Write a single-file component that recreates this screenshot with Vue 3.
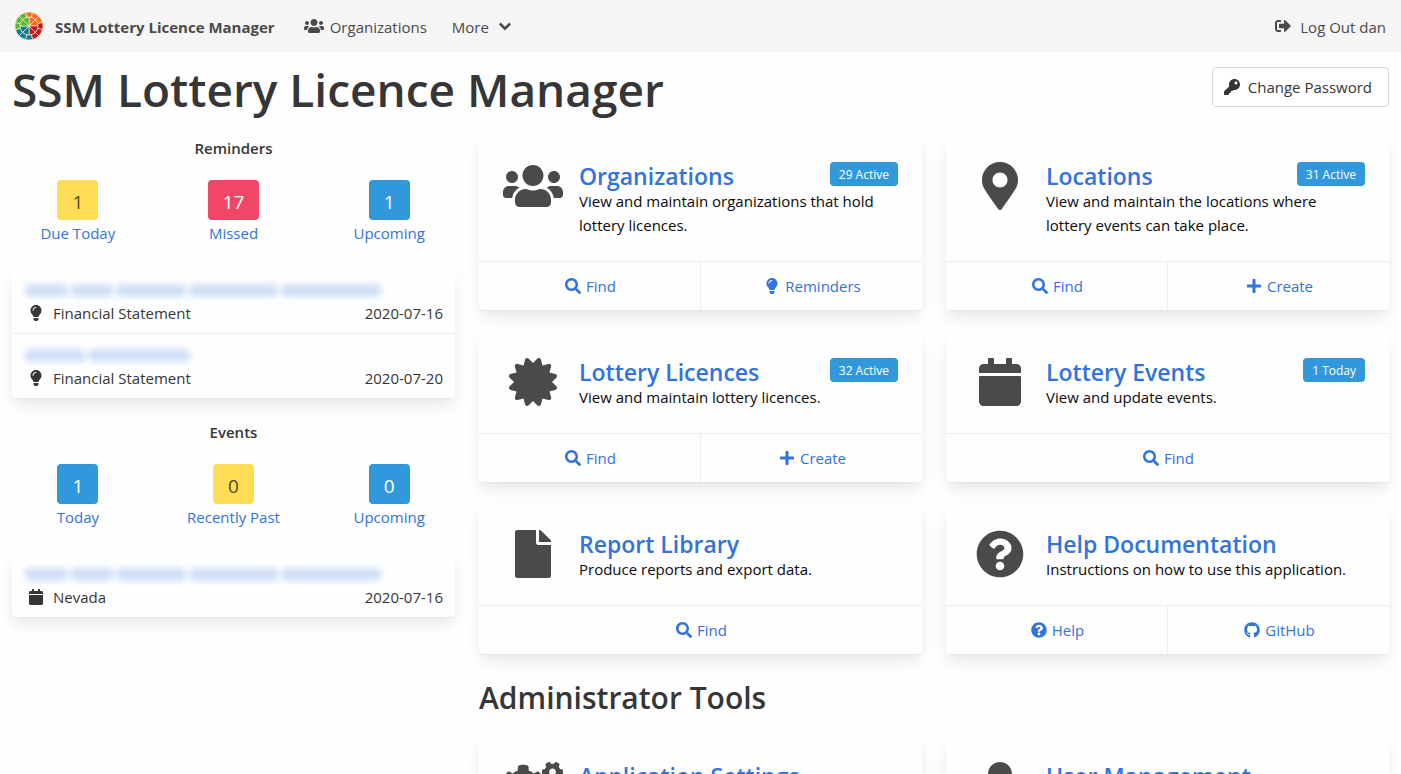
<script setup>
import { h } from 'vue'

const glyphs = {
  users: [640, 'M96 224c35.3 0 64-28.7 64-64s-28.7-64-64-64-64 28.7-64 64 28.7 64 64 64zm448 0c35.3 0 64-28.7 64-64s-28.7-64-64-64-64 28.7-64 64 28.7 64 64 64zm32 32h-64c-17.6 0-33.5 7.1-45.1 18.6 40.3 22.1 68.9 62 75.1 109.4h66c17.7 0 32-14.3 32-32v-32c0-35.3-28.7-64-64-64zm-256 0c61.9 0 112-50.1 112-112S381.9 32 320 32 208 82.1 208 144s50.1 112 112 112zm76.8 32h-8.3c-20.8 10-43.9 16-68.5 16s-47.6-6-68.5-16h-8.3C179.6 288 128 339.6 128 403.2V432c0 26.5 21.5 48 48 48h288c26.5 0 48-21.5 48-48v-28.8c0-63.6-51.6-115.2-115.2-115.2zm-223.7-13.4C161.5 263.1 145.6 256 128 256H64c-35.3 0-64 28.7-64 64v32c0 17.7 14.3 32 32 32h65.9c6.3-47.4 34.9-87.3 75.2-109.4z'],
  marker: [384, 'M172.268 501.67C26.97 291.031 0 269.413 0 192 0 85.961 85.961 0 192 0s192 85.961 192 192c0 77.413-26.97 99.031-172.268 309.67-9.535 13.774-29.93 13.773-39.464 0zM192 272c44.183 0 80-35.817 80-80s-35.817-80-80-80-80 35.817-80 80 35.817 80 80 80z'],
  certificate: [512, 'M458.622 255.92l45.985-45.005c13.708-12.977 7.316-36.039-10.664-40.339l-62.65-15.99 17.661-62.015c4.991-17.838-11.829-34.663-29.661-29.671l-61.994 17.667-15.984-62.671C337.085.197 313.765-6.276 300.99 7.228L256 53.57 211.011 7.229c-12.63-13.351-36.047-7.234-40.325 10.668l-15.984 62.671-61.995-17.667C74.87 57.907 58.056 74.738 63.046 92.572l17.661 62.015-62.65 15.99C.069 174.878-6.31 197.944 7.392 210.915l45.985 45.005-45.985 45.004c-13.708 12.977-7.316 36.039 10.664 40.339l62.65 15.99-17.661 62.015c-4.991 17.838 11.829 34.663 29.661 29.671l61.994-17.667 15.984 62.671c4.439 18.575 27.696 24.018 40.325 10.668L256 458.61l44.989 46.001c12.5 13.488 35.987 7.486 40.325-10.668l15.984-62.671 61.994 17.667c17.836 4.994 34.651-11.837 29.661-29.671l-17.661-62.015 62.65-15.99c17.987-4.302 24.366-27.367 10.664-40.339l-45.984-45.004z'],
  calendar: [448, 'M12 192h424c6.6 0 12 5.4 12 12v260c0 26.5-21.5 48-48 48H48c-26.5 0-48-21.5-48-48V204c0-6.6 5.4-12 12-12zm436-44v-36c0-26.5-21.5-48-48-48h-48V12c0-6.6-5.4-12-12-12h-40c-6.6 0-12 5.4-12 12v52H160V12c0-6.6-5.4-12-12-12h-40c-6.6 0-12 5.4-12 12v52H48C21.5 64 0 85.5 0 112v36c0 6.6 5.4 12 12 12h424c6.6 0 12-5.4 12-12z'],
  file: [384, 'M224 136V0H24C10.7 0 0 10.7 0 24v464c0 13.3 10.7 24 24 24h336c13.3 0 24-10.7 24-24V160H248c-13.2 0-24-10.8-24-24zm160-14.1v6.1H256V0h6.1c6.4 0 12.5 2.5 17 7l97.9 98c4.5 4.5 7 10.6 7 16.9z'],
  question: [512, 'M504 256c0 136.997-111.043 248-248 248S8 392.997 8 256C8 119.083 119.043 8 256 8s248 111.083 248 248zM262.655 90c-54.497 0-89.255 22.957-116.549 63.758-3.536 5.286-2.353 12.415 2.715 16.258l34.699 26.31c5.205 3.947 12.621 3.008 16.665-2.122 17.864-22.658 30.113-35.797 57.303-35.797 20.429 0 45.698 13.148 45.698 32.958 0 14.976-12.363 22.667-32.534 33.976C247.128 238.528 216 254.941 216 296v4c0 6.627 5.373 12 12 12h56c6.627 0 12-5.373 12-12v-1.333c0-28.462 83.186-29.647 83.186-106.667 0-58.002-60.165-102-116.531-102zM256 338c-25.365 0-46 20.635-46 46 0 25.364 20.635 46 46 46s46-20.636 46-46c0-25.365-20.635-46-46-46z'],
  search: [512, 'M505 442.7L405.3 343c-4.5-4.5-10.6-7-17-7H372c27.6-35.3 44-79.7 44-128C416 93.1 322.9 0 208 0S0 93.1 0 208s93.1 208 208 208c48.3 0 92.7-16.4 128-44v16.3c0 6.4 2.5 12.5 7 17l99.7 99.7c9.4 9.4 24.6 9.4 33.9 0l28.3-28.3c9.4-9.4 9.4-24.6.1-34zM208 336c-70.7 0-128-57.2-128-128 0-70.7 57.2-128 128-128 70.7 0 128 57.2 128 128 0 70.7-57.2 128-128 128z'],
  plus: [448, 'M416 208H272V64c0-17.67-14.33-32-32-32h-32c-17.67 0-32 14.33-32 32v144H32c-17.67 0-32 14.33-32 32v32c0 17.67 14.33 32 32 32h144v144c0 17.67 14.33 32 32 32h32c17.67 0 32-14.33 32-32V304h144c17.67 0 32-14.33 32-32v-32c0-17.67-14.33-32-32-32z'],
  bulb: [352, 'M96.06 454.35c.01 6.29 1.87 12.45 5.36 17.69l17.09 25.69a31.99 31.99 0 0 0 26.64 14.28h61.71a31.99 31.99 0 0 0 26.64-14.28l17.09-25.69a31.989 31.989 0 0 0 5.36-17.69l.04-38.35H96.01l.05 38.35zM0 176c0 44.37 16.45 84.85 43.56 115.78 16.52 18.85 42.36 58.23 52.21 91.45.04.26.07.52.11.78h160.24c.04-.26.07-.51.11-.78 9.85-33.22 35.69-72.6 52.21-91.45C335.55 260.85 352 220.37 352 176 352 78.61 272.91-.3 175.45 0 73.44.31 0 82.97 0 176zm176-80c-44.11 0-80 35.89-80 80 0 8.84-7.16 16-16 16s-16-7.16-16-16c0-61.76 50.24-112 112-112 8.84 0 16 7.16 16 16s-7.16 16-16 16z'],
  github: [496, 'M165.9 397.4c0 2-2.3 3.6-5.2 3.6-3.3.3-5.6-1.3-5.6-3.6 0-2 2.3-3.6 5.2-3.6 3-.3 5.6 1.3 5.6 3.6zm-31.1-4.5c-.7 2 1.3 4.3 4.3 4.9 2.6 1 5.6 0 6.2-2s-1.3-4.3-4.3-5.2c-2.6-.7-5.5.3-6.2 2.3zm44.2-1.7c-2.9.7-4.9 2.6-4.6 4.9.3 2 2.9 3.3 5.9 2.6 2.9-.7 4.9-2.6 4.6-4.6-.3-1.9-3-3.2-5.9-2.9zM244.8 8C106.1 8 0 113.3 0 252c0 110.9 69.8 205.8 169.5 239.2 12.8 2.3 17.3-5.6 17.3-12.1 0-6.2-.3-40.4-.3-61.4 0 0-70 15-84.7-29.8 0 0-11.4-29.1-27.8-36.6 0 0-22.9-15.7 1.6-15.4 0 0 24.9 2 38.6 25.8 21.9 38.6 58.6 27.5 72.9 20.9 2.3-16 8.8-27.1 16-33.7-55.9-6.2-112.3-14.3-112.3-110.5 0-27.5 7.6-41.3 23.6-58.9-2.6-6.5-11.1-33.3 2.6-67.9 20.9-6.5 69 27 69 27 20-5.6 41.5-8.5 62.8-8.5s42.8 2.9 62.8 8.5c0 0 48.1-33.6 69-27 13.7 34.7 5.2 61.4 2.6 67.9 16 17.7 25.8 31.5 25.8 58.9 0 96.5-58.9 104.2-114.8 110.5 9.2 7.9 17 22.9 17 46.4 0 33.7-.3 75.4-.3 83.6 0 6.5 4.6 14.4 17.3 12.1C428.2 457.8 496 362.9 496 252 496 113.3 383.5 8 244.8 8z'],
  key: [512, 'M512 176.001C512 273.203 433.202 352 336 352c-11.22 0-22.19-1.062-32.827-3.069l-24.012 27.014A23.999 23.999 0 0 1 261.223 384H224v40c0 13.255-10.745 24-24 24h-40v40c0 13.255-10.745 24-24 24H24c-13.255 0-24-10.745-24-24v-78.059c0-6.365 2.529-12.47 7.029-16.971l161.802-161.802C163.108 213.814 160 195.271 160 176 160 78.798 238.797.001 335.999 0 433.488-.001 512 78.511 512 176.001zM336 128c0 26.51 21.49 48 48 48s48-21.49 48-48-21.49-48-48-48-48 21.49-48 48z'],
  signOut: [512, 'M497 273L329 441c-15 15-41 4.5-41-17v-96H152c-13.3 0-24-10.7-24-24v-96c0-13.3 10.7-24 24-24h136V88c0-21.4 25.9-32 41-17l168 168c9.3 9.4 9.3 24.6 0 34zM192 436v-40c0-6.6-5.4-12-12-12H96c-17.7 0-32-14.3-32-32V160c0-17.7 14.3-32 32-32h84c6.6 0 12-5.4 12-12V76c0-6.6-5.4-12-12-12H96c-53 0-96 43-96 96v192c0 53 43 96 96 96h84c6.6 0 12-5.4 12-12z'],
  cogs: [640, 'M512.1 191l-8.2 14.3c-3 5.3-9.4 7.5-15.1 5.4-11.8-4.4-22.6-10.7-32.1-18.6-4.6-3.8-5.8-10.5-2.8-15.7l8.2-14.3c-6.9-8-12.3-17.3-15.9-27.4h-16.5c-6 0-11.2-4.3-12.2-10.3-2-12-2.1-24.6 0-37.1 1-6 6.2-10.4 12.2-10.4h16.5c3.6-10.1 9-19.4 15.9-27.4l-8.2-14.3c-3-5.2-1.9-11.9 2.8-15.7 9.5-7.9 20.4-14.2 32.1-18.6 5.7-2.1 12.1.1 15.1 5.4l8.2 14.3c10.5-1.9 21.2-1.9 31.7 0L552 6.3c3-5.3 9.4-7.5 15.1-5.4 11.8 4.4 22.6 10.7 32.1 18.6 4.6 3.8 5.8 10.5 2.8 15.7l-8.2 14.3c6.9 8 12.3 17.3 15.9 27.4h16.5c6 0 11.2 4.3 12.2 10.3 2 12 2.1 24.6 0 37.1-1 6-6.2 10.4-12.2 10.4h-16.5c-3.6 10.1-9 19.4-15.9 27.4l8.2 14.3c3 5.2 1.9 11.9-2.8 15.7-9.5 7.9-20.4 14.2-32.1 18.6-5.7 2.1-12.1-.1-15.1-5.4l-8.2-14.3c-10.4 1.9-21.2 1.9-31.7 0zm-10.5-58.8c38.5 29.6 82.4-14.3 52.8-52.8-38.5-29.7-82.4 14.3-52.8 52.8zM386.3 286.1l33.7 16.8c10.1 5.8 14.5 18.1 10.5 29.1-8.9 24.2-26.4 46.4-42.6 65.8-7.4 8.9-20.2 11.1-30.3 5.3l-29.1-16.8c-16 13.7-34.6 24.6-54.9 31.7v33.6c0 11.6-8.3 21.6-19.7 23.6-24.6 4.2-50.4 4.4-75.9 0-11.5-2-20-11.9-20-23.6V418c-20.3-7.2-38.9-18-54.9-31.7L74 403c-10 5.8-22.9 3.6-30.3-5.3-16.2-19.4-33.3-41.6-42.2-65.7-4-10.9.4-23.2 10.5-29.1l33.3-16.8c-3.9-20.9-3.9-42.4 0-63.4L12 205.8c-10.1-5.8-14.6-18.1-10.5-29 8.9-24.2 26-46.4 42.2-65.8 7.4-8.9 20.2-11.1 30.3-5.3l29.1 16.8c16-13.7 34.6-24.6 54.9-31.7V57.1c0-11.5 8.2-21.5 19.6-23.5 24.6-4.2 50.5-4.4 76-.1 11.5 2 20 11.9 20 23.6v33.6c20.3 7.2 38.9 18 54.9 31.7l29.1-16.8c10-5.8 22.9-3.6 30.3 5.3 16.2 19.4 33.2 41.6 42.1 65.8 4 10.9.1 23.2-10 29.1l-33.7 16.8c3.9 21 3.9 42.5 0 63.5zm-117.6 21.1c59.2-77-28.7-164.9-105.7-105.7-59.2 77 28.7 164.9 105.7 105.7z'],
  user: [448, 'M224 256c70.7 0 128-57.3 128-128S294.7 0 224 0 96 57.3 96 128s57.3 128 128 128zm89.6 32h-16.7c-22.2 10.2-46.9 16-72.9 16s-50.6-5.8-72.9-16h-16.7C60.2 288 0 348.2 0 422.4V464c0 26.5 21.5 48 48 48h352c26.5 0 48-21.5 48-48v-41.6c0-74.2-60.2-134.4-134.4-134.4z'],
  chevron: [448, 'M207.029 381.476L12.686 187.132c-9.373-9.373-9.373-24.569 0-33.941l22.667-22.667c9.357-9.357 24.522-9.375 33.901-.04L224 284.505l154.745-154.021c9.379-9.335 24.544-9.317 33.901.04l22.667 22.667c9.373 9.373 9.373 24.569 0 33.941L240.971 381.476c-9.373 9.372-24.569 9.372-33.942 0z']
}

const Icon = (props) =>
  h('svg', { viewBox: `0 0 ${glyphs[props.name][0]} 512`, fill: 'currentColor', 'aria-hidden': 'true' }, [
    h('path', { d: glyphs[props.name][1] })
  ])
Icon.props = ['name']

// Logo: twelve outer tiles round an inner disc of eight wedges.
const point = (r, deg) => {
  const a = (deg * Math.PI) / 180
  return `${(r * Math.sin(a)).toFixed(2)} ${(-r * Math.cos(a)).toFixed(2)}`
}
const tile = (inner, outer, from, to) =>
  `M${point(inner, from)}L${point(outer, from)}A${outer} ${outer} 0 0 1 ${point(outer, to)}L${point(inner, to)}Z`
const quarters = ['#ff6b1f', '#c4161c', '#0d7c8f', '#5cb82c']
const tiles = []
for (let i = 0; i < 12; i++) {
  tiles.push({ d: tile(9, 14, i * 30 - 15, i * 30 + 15), c: quarters[Math.floor(i / 3)] })
}
for (let i = 0; i < 8; i++) {
  tiles.push({ d: tile(0, 9, i * 45, i * 45 + 45), c: quarters[Math.floor(i / 2)] })
}

const summaries = [
  {
    title: 'Reminders',
    counts: [
      { n: 1, label: 'Due Today', tone: 'warning' },
      { n: 17, label: 'Missed', tone: 'danger' },
      { n: 1, label: 'Upcoming', tone: 'info' }
    ],
    items: [
      { icon: 'bulb', text: 'Financial Statement', date: '2020-07-16', words: [43, 42, 70, 89, 100] },
      { icon: 'bulb', text: 'Financial Statement', date: '2020-07-20', words: [60, 102] }
    ]
  },
  {
    title: 'Events',
    counts: [
      { n: 1, label: 'Today', tone: 'info' },
      { n: 0, label: 'Recently Past', tone: 'warning' },
      { n: 0, label: 'Upcoming', tone: 'info' }
    ],
    items: [{ icon: 'calendar', text: 'Nevada', date: '2020-07-16', words: [43, 42, 70, 89, 100] }]
  }
]

const find = { icon: 'search', label: 'Find' }
const create = { icon: 'plus', label: 'Create' }
const cards = [
  { icon: 'users', title: 'Organizations', tag: '29 Active', text: 'View and maintain organizations that hold lottery licences.', links: [find, { icon: 'bulb', label: 'Reminders' }] },
  { icon: 'marker', title: 'Locations', tag: '31 Active', text: 'View and maintain the locations where lottery events can take place.', links: [find, create] },
  { icon: 'certificate', title: 'Lottery Licences', tag: '32 Active', text: 'View and maintain lottery licences.', links: [find, create] },
  { icon: 'calendar', title: 'Lottery Events', tag: '1 Today', text: 'View and update events.', links: [find] },
  { icon: 'file', title: 'Report Library', text: 'Produce reports and export data.', links: [find] },
  { icon: 'question', title: 'Help Documentation', text: 'Instructions on how to use this application.', links: [{ icon: 'question', label: 'Help' }, { icon: 'github', label: 'GitHub' }] }
]
const adminCards = [
  { icon: 'cogs', title: 'Application Settings' },
  { icon: 'user', title: 'User Management' }
]
</script>

<template>
  <div class="page">
    <nav class="navbar">
      <a class="brand" href="#">
        <svg class="logo" viewBox="-14 -14 28 28" aria-hidden="true">
          <path v-for="(t, i) in tiles" :key="i" :d="t.d" :fill="t.c" stroke="#f3ecd8" stroke-width="0.7" />
        </svg>
        <span>SSM Lottery Licence Manager</span>
      </a>
      <a class="nav-link" href="#"><Icon name="users" class="icon" /><span>Organizations</span></a>
      <button class="nav-more" type="button"><span>More</span><Icon name="chevron" class="chevron" /></button>
      <a class="logout" href="#"><Icon name="signOut" class="icon-sm" /><span>Log Out dan</span></a>
    </nav>

    <header class="heading">
      <h1>SSM Lottery Licence Manager</h1>
      <button class="password" type="button"><Icon name="key" class="icon-sm" />Change Password</button>
    </header>

    <main class="columns">
      <aside>
        <section v-for="s in summaries" :key="s.title" class="summary">
          <h2>{{ s.title }}</h2>
          <div class="counts">
            <a v-for="c in s.counts" :key="c.label" href="#" class="count">
              <span class="number" :class="c.tone">{{ c.n }}</span>
              <span>{{ c.label }}</span>
            </a>
          </div>
          <ul class="panel">
            <li v-for="item in s.items" :key="item.date">
              <div class="redacted">
                <i v-for="(w, i) in item.words" :key="i" :style="{ width: w + 'px' }"></i>
              </div>
              <div class="entry">
                <Icon :name="item.icon" class="icon" />
                <span>{{ item.text }}</span>
                <time>{{ item.date }}</time>
              </div>
            </li>
          </ul>
        </section>
      </aside>

      <div class="content">
        <div class="cards">
          <article v-for="c in cards" :key="c.title" class="card">
            <div class="body">
              <Icon :name="c.icon" class="large" />
              <div class="copy">
                <span v-if="c.tag" class="tag">{{ c.tag }}</span>
                <h3><a href="#">{{ c.title }}</a></h3>
                <p>{{ c.text }}</p>
              </div>
            </div>
            <footer>
              <a v-for="l in c.links" :key="l.label" href="#"><Icon :name="l.icon" class="icon" />{{ l.label }}</a>
            </footer>
          </article>
        </div>
        <h2 class="section-title">Administrator Tools</h2>
        <div class="cards">
          <article v-for="c in adminCards" :key="c.title" class="card">
            <div class="body">
              <Icon :name="c.icon" class="large" />
              <div class="copy"><h3><a href="#">{{ c.title }}</a></h3></div>
            </div>
          </article>
        </div>
      </div>
    </main>
  </div>
</template>

<style>
html,
body {
  height: 100%;
  overflow: hidden;
  background: #fefefe;
}
</style>

<style scoped>
.page {
  height: 100vh;
  overflow: hidden;
  color: #363636;
  font: 15px/24px "Open Sans", "Noto Sans", sans-serif;
}
* {
  box-sizing: border-box;
}
h1,
h2,
h3,
p,
ul {
  margin: 0;
  padding: 0;
}
a {
  color: #3273dc;
  text-decoration: none;
}
button {
  font: inherit;
  color: inherit;
  background: none;
  border: 0;
  padding: 0;
  cursor: pointer;
}
svg {
  display: block;
  flex: none;
}
.icon {
  width: 20px;
  height: 16px;
}
.icon-sm {
  width: 16px;
  height: 16px;
}
.navbar {
  display: flex;
  align-items: center;
  height: 52px;
  padding: 0 15px;
  background: #f5f5f5;
  color: #4a4a4a;
}
.navbar a {
  display: flex;
  align-items: center;
  color: #4a4a4a;
}
.navbar span {
  padding-top: 2px;
}
.brand {
  gap: 12px;
  font-weight: 700;
}
.logo {
  width: 28px;
  height: 28px;
}
.nav-link {
  gap: 6px;
  margin-left: 29px;
}
.nav-more {
  display: flex;
  align-items: center;
  gap: 10px;
  margin-left: 25px;
}
.chevron {
  width: 12px;
  height: 13px;
  stroke: currentColor;
  stroke-width: 30px;
}
.logout {
  gap: 9px;
  margin-left: auto;
}
.heading {
  display: flex;
  justify-content: space-between;
  align-items: flex-start;
  padding: 15px 12px 27px;
}
h1 {
  font-size: 46px;
  line-height: 44px;
  font-weight: 600;
}
.password {
  display: flex;
  align-items: center;
  gap: 8px;
  height: 40px;
  padding: 0 16px 0 11px;
  background: #fff;
  border: 1px solid #dbdbdb;
  border-radius: 4px;
}
.columns {
  display: grid;
  grid-template-columns: repeat(3, minmax(0, 1fr));
  column-gap: 24px;
  padding: 0 12px;
}
.content {
  grid-column: span 2;
}
.summary {
  margin-bottom: 24px;
}
.summary h2 {
  font-size: 15px;
  line-height: 20px;
  font-weight: 600;
  text-align: center;
}
.counts {
  display: flex;
  margin: 22px -12px 24px;
}
.count {
  flex: 1;
  display: flex;
  flex-direction: column;
  align-items: center;
}
.number {
  height: 40px;
  margin-bottom: 1px;
  padding: 2px 15px 0;
  border-radius: 4px;
  font-size: 19px;
  line-height: 40px;
}
.warning {
  background: #ffdd57;
  color: #5a4a1a;
}
.danger {
  background: #f14668;
  color: #fff;
}
.info {
  background: #3298dc;
  color: #fff;
}
.panel,
.card {
  background: #fefefe;
  border-radius: 4px;
  box-shadow: 0 8px 16px -2px rgba(10, 10, 10, 0.1), 0 1px 0 0 rgba(10, 10, 10, 0.03);
}
.panel {
  list-style: none;
}
.panel li {
  padding: 8px 12px;
}
.panel li + li {
  border-top: 1px solid #ededed;
}
.redacted {
  display: flex;
  align-items: center;
  gap: 3px;
  height: 24px;
  padding-top: 2px;
  filter: blur(3px);
}
.redacted i {
  height: 13px;
  border-radius: 5px;
  background: #cfdff7;
}
.redacted i:first-child {
  margin-left: 1px;
}
.entry {
  display: flex;
  align-items: center;
  padding-left: 2px;
}
.entry span {
  margin-left: 7px;
}
.entry time {
  margin-left: auto;
}
.cards {
  display: grid;
  grid-template-columns: repeat(2, minmax(0, 1fr));
  gap: 24px;
}
.card {
  display: flex;
  flex-direction: column;
}
.body {
  display: flex;
  flex: 1;
  gap: 16px;
  padding: 24px;
  color: #4a4a4a;
}
.large {
  width: 60px;
  height: 48px;
}
.copy {
  flex: 1;
  min-width: 0;
}
.tag {
  float: right;
  height: 24px;
  padding: 1px 9px 0;
  border-radius: 4px;
  background: #3298dc;
  color: #fff;
  font-size: 12px;
}
h3 {
  margin-bottom: -2px;
  font-size: 23px;
  line-height: 29px;
  font-weight: 600;
}
.copy p {
  color: #0a0a0a;
}
.card footer {
  display: flex;
  border-top: 1px solid #ededed;
}
.card footer a {
  flex: 1;
  display: flex;
  align-items: center;
  justify-content: center;
  gap: 3px;
  padding: 12px;
}
.card footer a + a {
  border-left: 1px solid #ededed;
}
.section-title {
  margin: 26px 0 22px;
  font-size: 30px;
  line-height: 36px;
  font-weight: 600;
}
</style>
